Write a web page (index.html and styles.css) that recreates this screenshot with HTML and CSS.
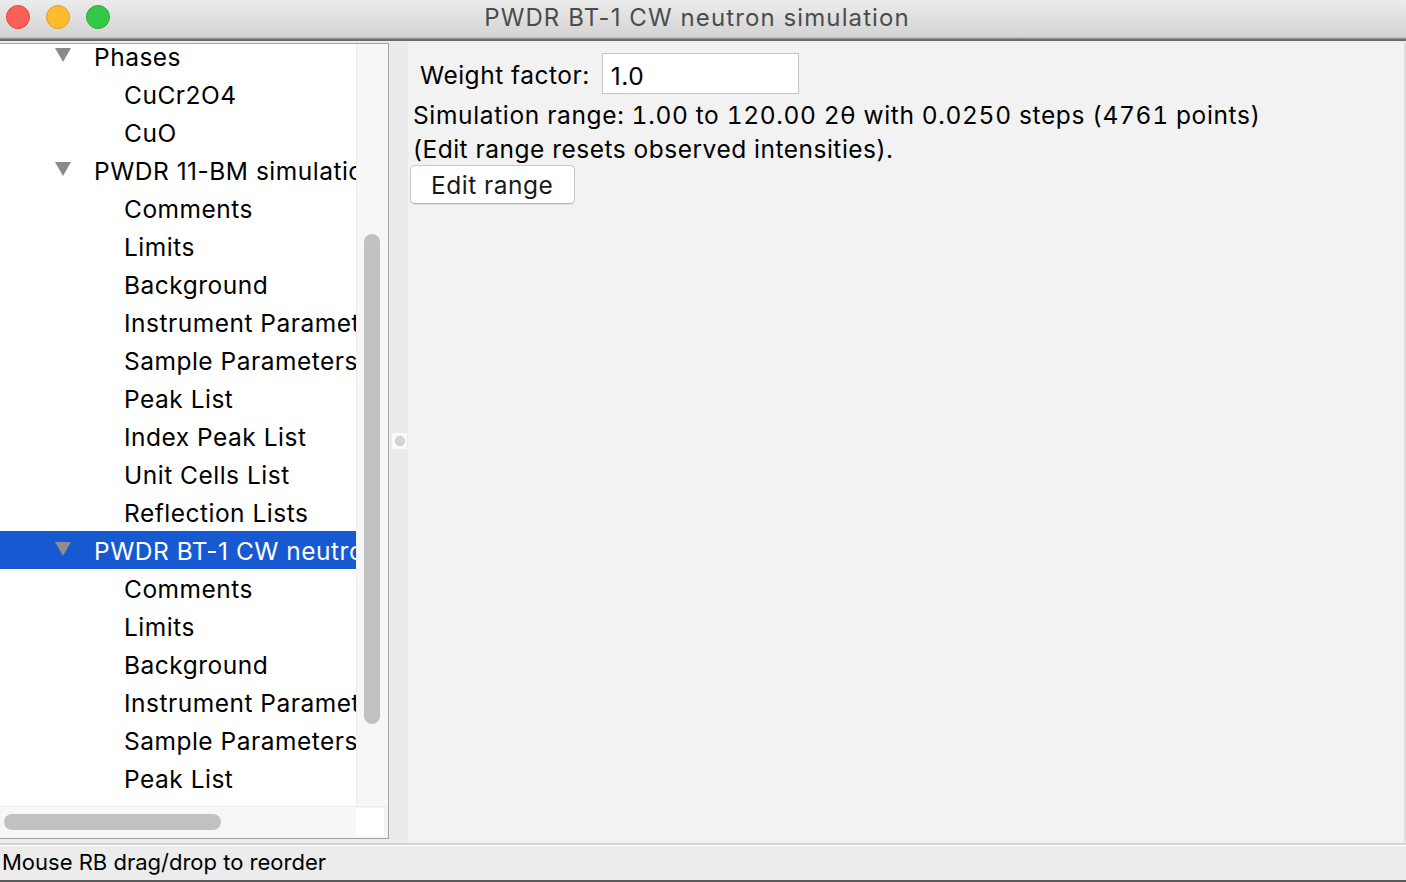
FILE: index.html
```html
<!DOCTYPE html>
<html>
<head>
<meta charset="utf-8">
<link rel="stylesheet" href="styles.css">
</head>
<body>
<div class="window">
  <div class="titlebar">
    <div class="lights">
      <span class="light red"></span>
      <span class="light yellow"></span>
      <span class="light green"></span>
    </div>
    <div class="title">PWDR BT-1 CW neutron simulation</div>
  </div>
  <div class="titleline"></div>
  <div class="main">
    <div class="leftframe">
      <div class="treeview">
        <div class="treeclip">
          <div class="tree">
            <div class="row l1"><span class="tri"></span><span class="lbl">Phases</span></div>
            <div class="row l2"><span class="lbl">CuCr2O4</span></div>
            <div class="row l2"><span class="lbl">CuO</span></div>
            <div class="row l1"><span class="tri"></span><span class="lbl">PWDR 11-BM simulation</span></div>
            <div class="row l2"><span class="lbl">Comments</span></div>
            <div class="row l2"><span class="lbl">Limits</span></div>
            <div class="row l2"><span class="lbl">Background</span></div>
            <div class="row l2"><span class="lbl">Instrument Parameters</span></div>
            <div class="row l2"><span class="lbl">Sample Parameters</span></div>
            <div class="row l2"><span class="lbl">Peak List</span></div>
            <div class="row l2"><span class="lbl">Index Peak List</span></div>
            <div class="row l2"><span class="lbl">Unit Cells List</span></div>
            <div class="row l2"><span class="lbl">Reflection Lists</span></div>
            <div class="row l1 selected"><span class="tri"></span><span class="lbl">PWDR BT-1 CW neutron simulation</span></div>
            <div class="row l2"><span class="lbl">Comments</span></div>
            <div class="row l2"><span class="lbl">Limits</span></div>
            <div class="row l2"><span class="lbl">Background</span></div>
            <div class="row l2"><span class="lbl">Instrument Parameters</span></div>
            <div class="row l2"><span class="lbl">Sample Parameters</span></div>
            <div class="row l2"><span class="lbl">Peak List</span></div>
          </div>
        </div>
        <div class="vscroll"><div class="vthumb"></div></div>
      </div>
      <div class="hbar">
        <div class="htrack"><div class="hthumb"></div></div>
        <div class="corner"></div>
      </div>
    </div>
    <div class="sash"><div class="grip"><span></span></div></div>
    <div class="rightpanel">
      <div class="wrow">
        <span class="wlabel">Weight factor:</span>
        <div class="input">1.0</div>
      </div>
      <div class="line first">Simulation range: 1.00 to 120.00 2θ with 0.0250 steps (4761 points)</div>
      <div class="line">(Edit range resets observed intensities).</div>
      <button class="btn">Edit range</button>
    </div>
  </div>
  <div class="statusbar">Mouse RB drag/drop to reorder</div>
</div>
</body>
</html>
```
FILE: styles.css
```css
html, body {
  margin: 0;
  padding: 0;
  width: 1406px;
  height: 882px;
  overflow: hidden;
  background: #ececec;
  font-family: Inter, "Liberation Sans", sans-serif;
  color: #000;
}

.window {
  width: 1406px;
  height: 882px;
  display: flex;
  flex-direction: column;
  background: #ececec;
}

.titlebar {
  height: 37px;
  flex: none;
  background: linear-gradient(#ececec, #d3d3d3);
  border-bottom: 1px solid #bcbcbc;
  display: flex;
  align-items: center;
  position: relative;
}

.lights {
  display: flex;
  gap: 16px;
  padding-left: 6px;
  margin-top: -4px;
}

.light {
  width: 24px;
  height: 24px;
  border-radius: 50%;
  box-sizing: border-box;
}
.red { background: #fc5f57; border: 1px solid #df4744; }
.yellow { background: #fdbc2e; border: 1px solid #dea123; }
.green { background: #33c748; border: 1px solid #27aa35; }

.title {
  position: absolute;
  left: 0;
  right: 0;
  top: 0;
  height: 35px;
  line-height: 35px;
  text-align: center;
  font-size: 24px;
  color: #4c4c4c;
  letter-spacing: 1.1px;
  padding-right: 12px;
}

.titleline {
  height: 3px;
  flex: none;
  background: #6a6a6a;
  border-top: 1px solid #9a9a9a;
  box-sizing: border-box;
}

.main {
  flex: none;
  height: 804px;
  box-sizing: border-box;
  display: flex;
  padding-top: 2px;
  padding-bottom: 4px;
  border-bottom: 2px solid #d3d3d3;
}

.leftframe {
  width: 389px;
  flex: none;
  box-sizing: border-box;
  border-top: 1px solid #a3a3a3;
  border-right: 1px solid #a3a3a3;
  border-bottom: 1px solid #a3a3a3;
  display: flex;
  flex-direction: column;
  background: #f4f4f4;
}

.treeview {
  flex: 1;
  display: flex;
  min-height: 0;
}

.treeclip {
  width: 356px;
  flex: none;
  overflow: hidden;
  background: #fff;
}

.tree {
  margin-top: -7px;
}

.row {
  height: 38px;
  display: flex;
  align-items: center;
  white-space: nowrap;
  font-size: 24.5px;
  letter-spacing: 0.5px;
}

.lbl { padding-top: 2px; }

.row.l1 { padding-left: 55px; }
.row.l2 { padding-left: 124px; }

.tri {
  width: 0;
  height: 0;
  border-left: 8px solid transparent;
  border-right: 8px solid transparent;
  border-top: 14px solid #8a8a8a;
  margin-right: 23px;
  margin-top: -2px;
}

.row.selected {
  background: #1659d0;
  color: #fff;
}
.row.selected .tri { border-top-color: #8e8e8e; }

.vscroll {
  flex: 1;
  background: #f7f7f7;
  border-left: 1px solid #ececec;
  padding-top: 190px;
  box-sizing: border-box;
}

.vthumb {
  width: 16px;
  height: 490px;
  margin-left: 7px;
  border-radius: 8px;
  background: #c1c1c1;
}

.hbar {
  height: 32px;
  flex: none;
  display: flex;
  border-top: 1px solid #ececec;
  box-sizing: border-box;
}

.htrack {
  width: 356px;
  flex: none;
  background: #f7f7f7;
  padding-top: 7px;
  box-sizing: border-box;
}

.hthumb {
  width: 217px;
  height: 16px;
  margin-left: 4px;
  border-radius: 8px;
  background: #c1c1c1;
}

.corner {
  flex: 1;
  background: #fff;
  margin-top: 1px;
  margin-bottom: 1px;
  margin-right: 4px;
}

.sash {
  width: 19px;
  flex: none;
  background: #ebebeb;
  display: flex;
  align-items: center;
  justify-content: center;
  padding-left: 2px;
  box-sizing: border-box;
}

.grip {
  width: 15px;
  height: 16px;
  background: #fafafa;
  display: flex;
  align-items: center;
  justify-content: center;
  margin-top: 0;
}
.grip span {
  width: 10px;
  height: 10px;
  border-radius: 50%;
  background: #d6d6d6;
  border: 1px solid #c4c4c4;
  box-sizing: border-box;
}

.rightpanel {
  flex: 1;
  background: #f2f2f2;
  border-right: 2px solid #dedede;
  padding: 9px 0 0 5px;
  margin-bottom: -3px;
  display: flex;
  flex-direction: column;
  align-items: flex-start;
  font-size: 24.5px;
  letter-spacing: 0.5px;
}

.wrow {
  display: flex;
  align-items: center;
  padding-left: 7px;
  gap: 12px;
  height: 42px;
}

.wlabel { padding-top: 4px; }

.input {
  width: 197px;
  height: 41px;
  box-sizing: border-box;
  background: #fff;
  border: 1px solid #c5c5c5;
  padding-left: 8px;
  line-height: 45px;
}

.line {
  line-height: 34px;
  white-space: nowrap;
}

.line.first {
  margin-top: 4px;
  font-variant-numeric: tabular-nums;
  letter-spacing: 0.65px;
}

.btn {
  margin-left: -3px;
  margin-top: -1px;
  width: 165px;
  height: 39px;
  font: inherit;
  letter-spacing: inherit;
  color: #1a1a1a;
  background: #fff;
  border: 1px solid #c8c8c8;
  border-bottom-color: #b3b3b3;
  border-radius: 5px;
  box-shadow: 0 1px 1px rgba(0,0,0,0.08);
  text-align: left;
  padding: 0 0 0 20px;
}

.statusbar {
  height: 37px;
  flex: none;
  box-sizing: border-box;
  border-top: 1px solid #fff;
  border-bottom: 2px solid #5a5a5a;
  background: #ececec;
  font-size: 22px;
  line-height: 32px;
  padding-left: 2px;
  white-space: nowrap;
}
```
